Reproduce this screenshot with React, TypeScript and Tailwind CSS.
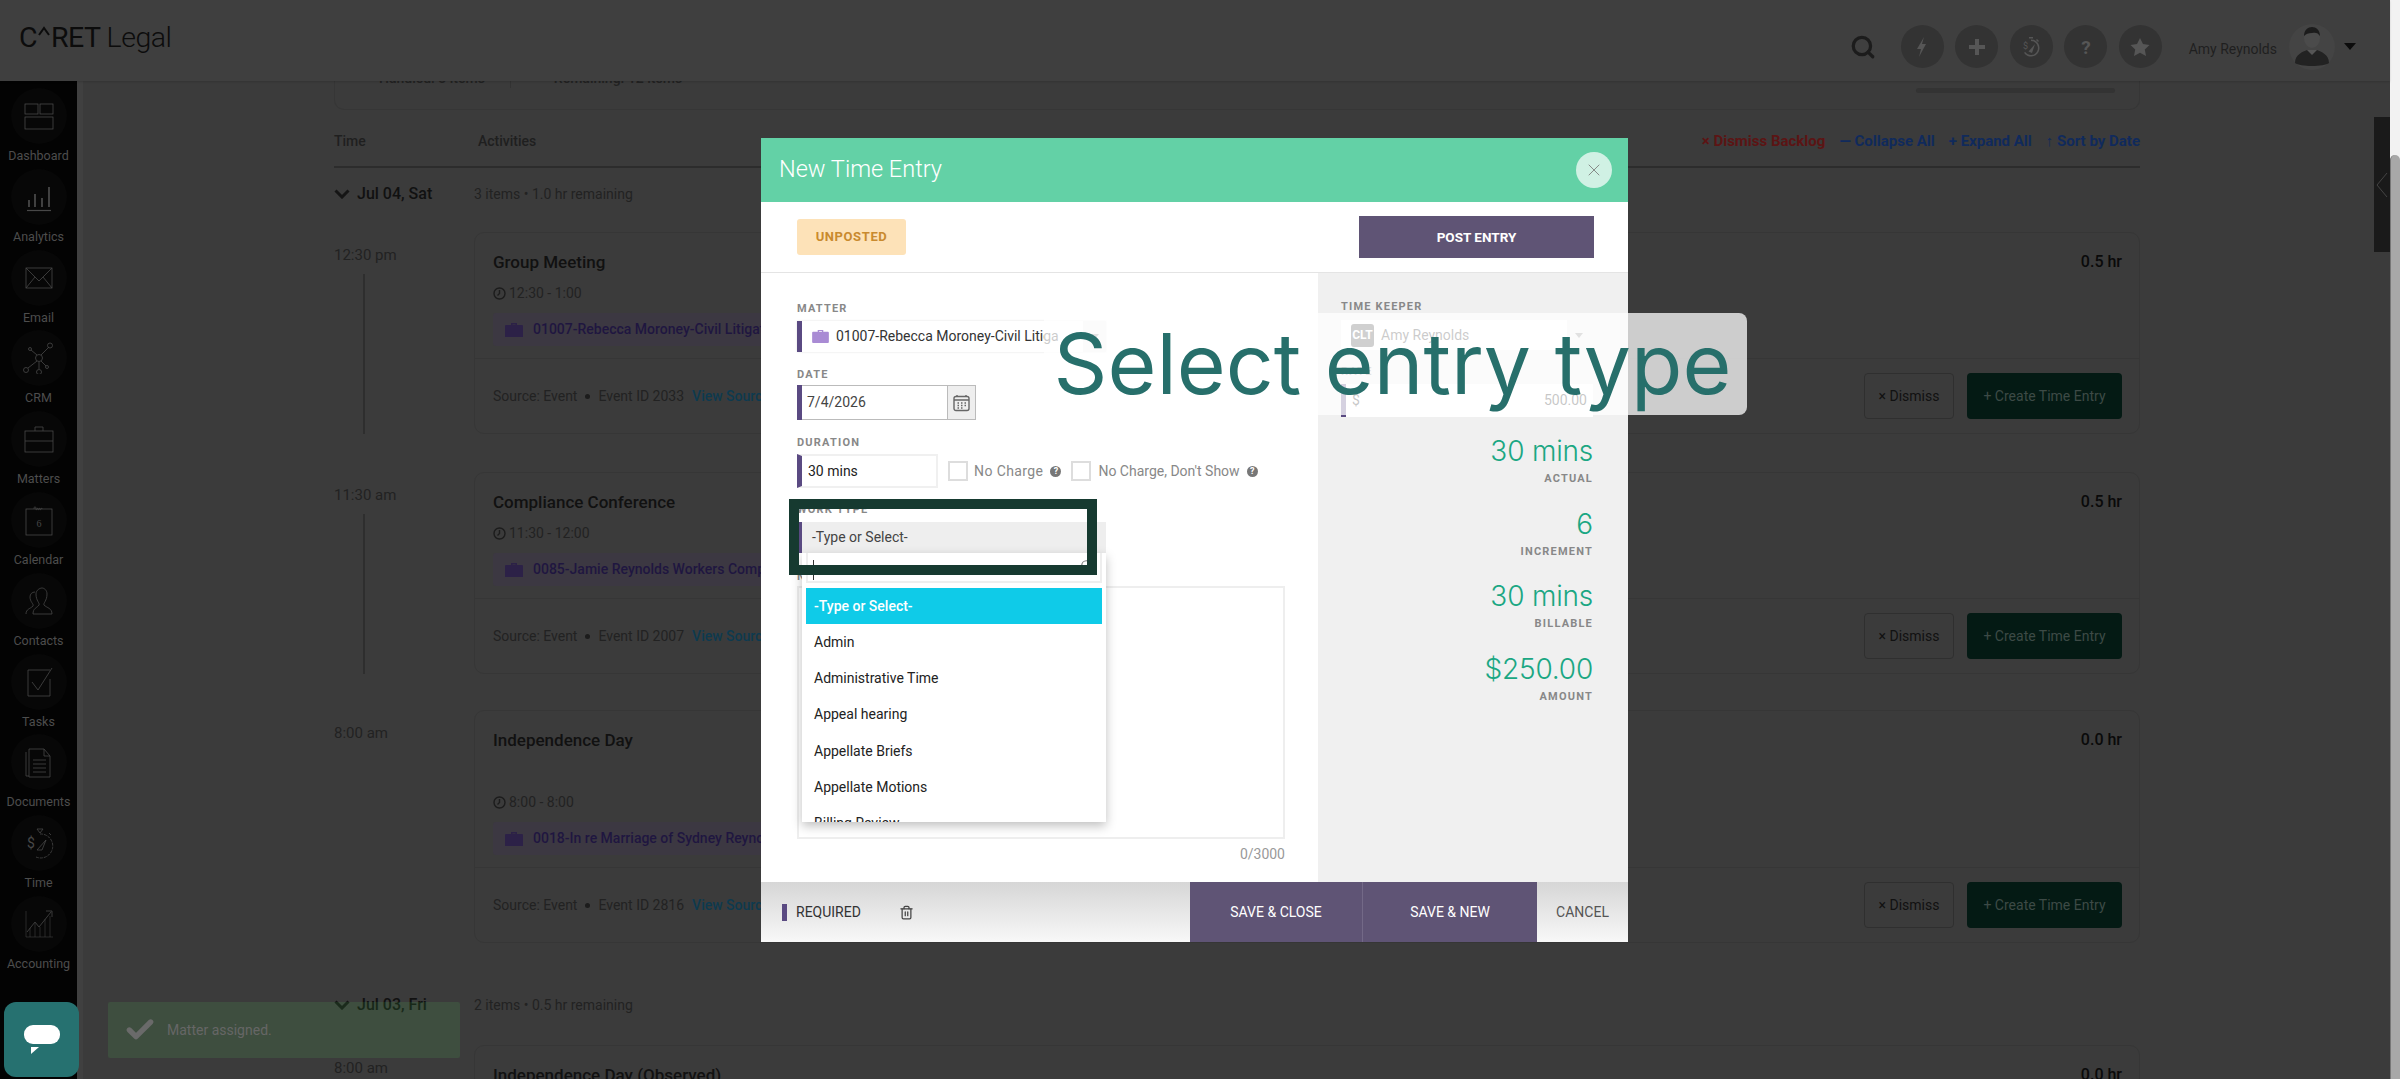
import { Check, Search, Trash2, X } from "lucide-react";

const navItems = [
  { label: "Dashboard", icon: <><rect x="2" y="4" width="13" height="10" /><rect x="17" y="4" width="13" height="10" /><rect x="2" y="17" width="28" height="12" /></> },
  { label: "Analytics", icon: <><path d="M6 26v-7M12 26V13M19 26v-9M26 26V6" strokeWidth="1.800" /><path d="M4 29.500h24" strokeWidth="1.200" /></> },
  { label: "Email", icon: <><rect x="3" y="6" width="26" height="20" /><path d="M3 6l13 13L29 6M3 26l9-11M29 26l-9-11" /></> },
  { label: "CRM", icon: <><circle cx="16" cy="16" r="3.500" /><circle cx="27" cy="3.500" r="2.500" /><circle cx="3" cy="28" r="2.500" /><circle cx="16" cy="30" r="2.500" /><circle cx="7" cy="7" r="1.500" /><circle cx="24" cy="25" r="1.500" /><path d="M18 13l8-8M14 19L5 26M16 20v7M14 13L8 8M18 19l5 5" /></> },
  { label: "Matters", icon: <><rect x="2" y="8" width="28" height="21" /><path d="M12 8V4h8v4M2 18h28" /></> },
  { label: "Calendar", icon: <><rect x="3" y="5" width="26" height="26" /><path d="M11 5c0-3 2-3 2 0s2-3 2 0 2-3 2 0 2-3 2 0" /><text x="16" y="23" textAnchor="middle" fontSize="10" fill="#484848" stroke="none" fontFamily="Liberation Serif, serif">6</text></> },
  { label: "Contacts", icon: <><path d="M3 29c0-5 4-5 7-8 1-2-3-4-3-9 0-3 2-5 5-5M10 29h19c0-6-5-6-8-9-1-2 3-4 3-11 0-4-3-6-5-6s-6 2-6 6c0 7 4 9 3 11-2 3-6 3-6 9" /></> },
  { label: "Tasks", icon: <><path d="M27 13v17H5V4h22" /><path d="M9 16l6 8L29 2" /></> },
  { label: "Documents", icon: <><path d="M6 3h15l6 7v21H6zM21 3v7h6M3 6v24h3M10 14h13M10 18h13M10 22h13M10 26h13" /></> },
  { label: "Time", icon: <><path d="M17 7a12 12 0 1 1-4 23" strokeDasharray="3 1" /><path d="M14 2h6l-3 4zM26 6l2 2" /><path d="M14 23l9-10-4 10z" /><text x="8" y="21" textAnchor="middle" fontSize="14" fill="#484848" stroke="none" fontFamily="Roboto, sans-serif">$</text></> },
  { label: "Accounting", icon: <><path d="M3 3v26h27M7 29V20M12 29V15M17 29V19M22 29V11M27 29V8" strokeWidth="0.500" /><path d="M4 24l8-10 4 5L28 4M23 3h6v6" /></> },
];

function SideIcon({ children }: { children: React.ReactNode }) {
  return (
    <svg width="32" height="32" viewBox="0 0 32 32" fill="none" stroke="#484848" strokeWidth="0.800">
      {children}
    </svg>
  );
}

function Sidebar() {
  return (
    <aside className="w-[77px] shrink-0 bg-[#030303]">
      {navItems.map((item) => (
        <div key={item.label} className="h-[80.8px] flex flex-col items-center pt-[7px]">
          <div className="w-[56px] h-[56px] shrink-0 rounded-full bg-[#070707] flex items-center justify-center">
            <SideIcon>{item.icon}</SideIcon>
          </div>
          <span className="mt-[4px] text-[12.500px] leading-[16px] text-[#4d4d4d] whitespace-nowrap">{item.label}</span>
        </div>
      ))}
    </aside>
  );
}

function RoundAction({ children }: { children: React.ReactNode }) {
  return (
    <div className="w-[43px] h-[43px] rounded-full bg-[#333333] flex items-center justify-center">
      <svg width="24" height="24" viewBox="0 0 24 24" fill="#565656">
        {children}
      </svg>
    </div>
  );
}

function TopBar() {
  return (
    <header className="relative z-10 h-[81px] shrink-0 bg-[#3f3f3f] flex items-center pt-[12px] pl-[19px] pr-[34px] shadow-[0_1px_2px_rgba(0,0,0,0.15)]">
      <div className="-mt-[16px] text-[28.500px] leading-none text-[#0c0c0c] tracking-[-0.5px] flex items-baseline font-normal">
        <span>C</span>
        <svg width="12" height="22" viewBox="0 0 12 22" fill="none" stroke="#0c0c0c" strokeWidth="2" className="mx-[1px]">
          <path d="M1 10l5-7 5 7" />
        </svg>
        <span>RET</span>
        <span className="ml-[6px] font-light">Legal</span>
      </div>
      <div className="ml-auto flex items-center">
        <Search size={26} strokeWidth={3} className="text-[#1c1c1c] mr-[25px]" />
        <div className="flex gap-[11.5px]">
          <RoundAction><path d="M14 2L7 14h4l-2 8 7-13h-4z" /></RoundAction>
          <RoundAction><path d="M10 4h4v6h6v4h-6v6h-4v-6H4v-4h6z" /></RoundAction>
          <RoundAction>
            <path d="M12 4.500a8.500 8.500 0 1 1-7 13.300l1.200-.8A7 7 0 1 0 12 6zM10 2h4v1.500h-4zM18 4l2 2-1 1-2-2zM9.500 16.500L16 9l-3 9z" />
            <text x="6.500" y="14" textAnchor="middle" fontSize="9" fontFamily="Roboto, sans-serif">$</text>
          </RoundAction>
          <RoundAction><text x="12" y="19" textAnchor="middle" fontSize="19" fontWeight="700" fontFamily="Roboto, sans-serif">?</text></RoundAction>
          <RoundAction><path d="M12 3l3 6 6.500 1-4.700 4.500 1.200 6.500-6-3.200L6 21l1.200-6.500L2.500 10 9 9z" /></RoundAction>
        </div>
        <span className="ml-[27px] mt-[5px] text-[14px] text-[#1f1f1f]">Amy Reynolds</span>
        <div className="ml-[12px] w-[46px] h-[46px] rounded-full bg-[#444444] flex items-center justify-center">
          <svg width="36" height="40" viewBox="0 0 36 40">
            <ellipse cx="18" cy="11" rx="8" ry="10" fill="#4b4b4b" />
            <path d="M10 9c0-6 4-9 8-9s8 3 8 9c-2-3-4-4-8-3-4 0-6 1-8 3z" fill="#1c1c1c" />
            <path d="M1 36c0-9 8-11 12-13h10c4 2 12 4 12 13-5 4-29 4-34 0z" fill="#222222" />
            <path d="M13 23l5 5 5-5z" fill="#555555" />
          </svg>
        </div>
        <div className="ml-[9px] w-0 h-0 border-x-[6px] border-x-transparent border-t-[7px] border-t-[#0c0c0c]" />
      </div>
    </header>
  );
}

function DayRow({ date, summary, className }: { date: string; summary: string; className: string }) {
  return (
    <div className={`flex items-center h-[24px] ${className}`}>
      <svg width="16" height="10" viewBox="0 0 16 10" className="mr-[7px]" fill="none" stroke="#151515" strokeWidth="3">
        <path d="M1.500 1.500L8 8l6.500-6.500" />
      </svg>
      <span className="w-[117px] text-[16px] font-medium text-[#111111] whitespace-nowrap">{date}</span>
      <span className="text-[14px] text-[#222222] whitespace-nowrap">{summary}</span>
    </div>
  );
}

type Entry = {
  time: string;
  title: string;
  range?: string;
  matter?: string;
  eventId?: string;
  hours: string;
  line?: boolean;
  tall?: boolean;
};

function EntryCard({ entry }: { entry: Entry }) {
  return (
    <div className="w-[1666px] rounded-[10px] border border-[#363636]">
      <div className="flex items-start justify-between pt-[17px] pl-[18px] pr-[17px]">
        <h3 className="text-[17px] leading-[24px] font-medium text-[#111111] whitespace-nowrap">{entry.title}</h3>
        <span className="text-[16px] leading-[24px] font-medium text-[#0a0a0a]">{entry.hours}</span>
      </div>
      {entry.range && (
        <div className={`pl-[18px] pb-[12px] ${entry.tall ? "pt-[40px]" : "pt-[9px]"}`}>
          <div className="flex items-center h-[20px] text-[14px] text-[#222222]">
            <svg width="13" height="13" viewBox="0 0 13 13" fill="none" stroke="#1c1c1c" strokeWidth="1.400" className="mr-[3px]">
              <circle cx="6.500" cy="6.500" r="5.500" />
              <path d="M6.500 3v3.500L4.500 8.500" />
            </svg>
            {entry.range}
          </div>
          <div className="mt-[10px] h-[33px] w-[420px] rounded-[3px] bg-[#3c3842] flex items-center pl-[12px] text-[14px] font-medium text-[#1f1640] whitespace-nowrap">
            <svg width="18" height="16" viewBox="0 0 18 16" fill="#2c2147" className="mr-[10px]">
              <path d="M6 1h6v2h5a1 1 0 0 1 1 1v11H0V4a1 1 0 0 1 1-1h5zM7.500 2.500V3h3v-.5z" />
            </svg>
            {entry.matter}
          </div>
        </div>
      )}
      {entry.eventId && (
        <div className="h-[75px] border-t border-[#363636] flex items-center justify-between pl-[18px] pr-[17px]">
          <div className="flex items-center text-[14px] text-[#222222] whitespace-nowrap">
            Source: Event
            <span className="mx-[8px] w-[5px] h-[5px] rounded-full bg-[#1c1c1c]" />
            Event ID {entry.eventId}
            <span className="ml-[8px] font-medium text-[#0d3a4f]">View Source</span>
          </div>
          <div className="flex items-center gap-[13px]">
            <div className="w-[90px] h-[46px] rounded-[4px] border border-[#2f2f2f] flex items-center justify-center text-[14px] text-[#111111]">× Dismiss</div>
            <div className="w-[155px] h-[46px] rounded-[4px] bg-[#041a14] flex items-center justify-center text-[14px] text-[#3d4a46]">+ Create Time Entry</div>
          </div>
        </div>
      )}
    </div>
  );
}

function TimelineEntry({ entry, className }: { entry: Entry; className: string }) {
  return (
    <div className={`flex ${className}`}>
      <div className="w-[140px] shrink-0 flex flex-col pt-[13px]">
        <span className="text-[15px] leading-[20px] text-[#222222]">{entry.time}</span>
        {entry.line && <div className="ml-[29px] mt-[9px] w-[2px] flex-1 bg-[#2e2e2e]" />}
      </div>
      <EntryCard entry={entry} />
    </div>
  );
}

function MainContent() {
  return (
    <main className="flex-1 min-w-0 pl-[251px]">
      <div className="w-[1806px]">
        <div className="relative -mt-[31px] h-[60px] rounded-b-[10px] border border-t-0 border-[#363636] flex items-start pt-[18px] pl-[26px] text-[14px] font-medium text-[#222222]">
          <span className="mt-[7px] w-[6px] h-[6px] rounded-full bg-[#1f5a3c]" />
          <span className="ml-[12px]">Handled: 3 items</span>
          <span className="ml-[25px] w-px h-[20px] bg-[#333333]" />
          <span className="ml-[27px] mt-[7px] w-[6px] h-[6px] rounded-full bg-[#7a5418]" />
          <span className="ml-[10px]">Remaining: 12 items</span>
          <div className="ml-auto mr-[24px] mt-[20px] w-[199px] h-[5px] shrink-0 rounded-full bg-[#333333]" />
        </div>

        <div className="flex items-center justify-between h-[58px] border-b-2 border-[#2c2c2c] pt-[6px] text-[14px] font-medium text-[#1f1f1f]">
          <div className="flex">
            <span className="w-[144px]">Time</span>
            <span>Activities</span>
          </div>
          <div className="flex gap-[14px] text-[15px] font-bold">
            <span className="text-[#5c1414]">× Dismiss Backlog</span>
            <span className="text-[#102a5c]">— Collapse All</span>
            <span className="text-[#102a5c]">+ Expand All</span>
            <span className="text-[#102a5c]">↑ Sort by Date</span>
          </div>
        </div>

        <DayRow className="mt-[14px]" date="Jul 04, Sat" summary="3 items • 1.0 hr remaining" />
        <TimelineEntry
          className="mt-[26px] pb-[38px]"
          entry={{ time: "12:30 pm", title: "Group Meeting", range: "12:30 - 1:00", matter: "01007-Rebecca Moroney-Civil Litigation", eventId: "2033", hours: "0.5 hr", line: true }}
        />
        <TimelineEntry
          className="pb-[36px]"
          entry={{ time: "11:30 am", title: "Compliance Conference", range: "11:30 - 12:00", matter: "0085-Jamie Reynolds Workers Compensation", eventId: "2007", hours: "0.5 hr", line: true }}
        />
        <TimelineEntry
          entry={{ time: "8:00 am", title: "Independence Day", range: "8:00 - 8:00", matter: "0018-In re Marriage of Sydney Reynolds", eventId: "2816", hours: "0.0 hr", tall: true }}
          className=""
        />

        <DayRow className="mt-[50px]" date="Jul 03, Fri" summary="2 items • 0.5 hr remaining" />
        <TimelineEntry className="mt-[28px]" entry={{ time: "8:00 am", title: "Independence Day (Observed)", hours: "0.0 hr" }} />
      </div>
    </main>
  );
}

function FieldLabel({ children, className = "" }: { children: React.ReactNode; className?: string }) {
  return <div className={`text-[11px] leading-[14px] font-bold tracking-[1.2px] text-[#888888] whitespace-nowrap ${className}`}>{children}</div>;
}

function HelpDot() {
  return (
    <span className="ml-[7px] w-[11px] h-[11px] rounded-full bg-[#777777] text-white text-[9px] leading-[11px] font-bold text-center">?</span>
  );
}

function ArrowBox() {
  return (
    <div className="w-[23px] h-full bg-[#eeeeee] flex items-center justify-center">
      <div className="w-0 h-0 border-x-[4px] border-x-transparent border-t-[5px] border-t-[#888888]" />
    </div>
  );
}

const workTypes = ["Admin", "Administrative Time", "Appeal hearing", "Appellate Briefs", "Appellate Motions", "Billing Review"];

function FormColumn() {
  return (
    <div className="w-[557px] shrink-0 pl-[36px] pt-[29px] text-[14px]">
      <FieldLabel className="mb-[5px]">MATTER</FieldLabel>
      <div className="h-[31px] w-[309px] flex border-l-[5px] border-[#5a4a82] shadow-[0_0_2px_rgba(0,0,0,0.12)]">
        <div className="flex-1 flex items-center pl-[10px] overflow-hidden whitespace-nowrap text-[#333333]">
          <svg width="17" height="13" viewBox="0 0 18 14" fill="#a98bd4" className="mr-[7px] shrink-0">
            <path d="M6 0h6v2h5a1 1 0 0 1 1 1v10a1 1 0 0 1-1 1H1a1 1 0 0 1-1-1V3a1 1 0 0 1 1-1h5zM7.500 1.200V2h3v-.8z" />
          </svg>
          01007-Rebecca Moroney-Civil Litiga
        </div>
        <ArrowBox />
      </div>

      <FieldLabel className="mt-[16px] mb-[3px]">DATE</FieldLabel>
      <div className="h-[35px] w-[179px] flex border-l-[5px] border-[#5a4a82]">
        <div className="flex-1 border-y border-[#bbbbbb] flex items-center pl-[5px] text-[#444444]">7/4/2026</div>
        <div className="w-[29px] border border-[#bbbbbb] bg-[#eeeeee] flex items-center justify-center">
          <svg width="17" height="18" viewBox="0 0 17 18" fill="none" stroke="#666666" strokeWidth="1.400">
            <rect x="1" y="2.500" width="15" height="14" rx="2" />
            <path d="M1 6h15M4 1v2M13 1v2M4.500 9h1.500M8 9h1.500M11.500 9h1.500M4.500 11.500h1.500M8 11.500h1.500M11.500 11.500h1.500M4.500 14h1.500M8 14h1.500" />
          </svg>
        </div>
      </div>

      <FieldLabel className="mt-[16px] mb-[4px]">DURATION</FieldLabel>
      <div className="flex items-center">
        <div className="h-[34px] w-[141px] flex items-center pl-[6px] border-l-[5px] border-l-[#5a4a82] border-y-2 border-r-2 border-y-[#f0f0f0] border-r-[#f0f0f0] text-[#222222]">30 mins</div>
        <div className="ml-[10px] w-[20px] h-[20px] border-2 border-[#dddddd]" />
        <span className="ml-[6px] text-[#888888] tracking-[0.4px]">No Charge</span>
        <HelpDot />
        <div className="ml-[10px] w-[20px] h-[20px] border-2 border-[#dddddd]" />
        <span className="ml-[7px] text-[#888888] whitespace-nowrap">No Charge, Don't Show</span>
        <HelpDot />
      </div>

      <FieldLabel className="mt-[15px] mb-[5px]">WORK TYPE</FieldLabel>
      <div className="relative z-10 w-[309px]">
        <div className="h-[31px] flex items-center pl-[10px] border-l-[5px] border-[#5a4a82] bg-[#eeeeee] text-[#444444]">-Type or Select-</div>
        <div className="absolute left-[5px] top-[31px] w-[304px] h-[269px] bg-white shadow-[0_4px_10px_rgba(0,0,0,0.25)] overflow-hidden">
          <div className="mx-[4px] h-[30px] border-b-2 border-x-2 border-[#eeeeee] relative">
            <div className="absolute left-[5px] top-[7px] w-px h-[20px] bg-[#333333]" />
            <Search size={14} className="absolute right-[6px] top-[6px] text-[#777777]" />
          </div>
          <div className="mx-[4px] mt-[5px] h-[36px] bg-[#0fcbe8] flex items-center pl-[8px] font-medium text-white">-Type or Select-</div>
          {workTypes.map((type) => (
            <div key={type} className="h-[36.300px] flex items-center pl-[12px] text-[#222222]">{type}</div>
          ))}
        </div>
      </div>

      <FieldLabel className="mt-[17px] mb-[2px]">NARRATIVE</FieldLabel>
      <div className="w-[488px] h-[253px] border-2 border-[#eeeeee]" />
      <div className="w-[488px] mt-[6px] text-right text-[#999999] leading-[18px]">0/3000</div>
    </div>
  );
}

function Stat({ value, label }: { value: string; label: string }) {
  return (
    <div className="text-right">
      <div className="text-[28px] leading-[36px] font-light tracking-[-0.2px] text-[#1ba783] [font-family:Inter,sans-serif]">{value}</div>
      <div className="mt-[3px] text-[11px] leading-[14px] font-bold tracking-[1.200px] text-[#888888]">{label}</div>
    </div>
  );
}

function SummaryColumn() {
  return (
    <div className="flex-1 bg-[#f0f0f0] pl-[23px] pr-[35px] pt-[27px] text-[14px]">
      <FieldLabel className="mb-[6px]">TIME KEEPER</FieldLabel>
      <div className="h-[30px] w-[249px] bg-white flex items-center pl-[10px]">
        <div className="w-[23px] h-[23px] rounded-[3px] bg-[#444444] text-white text-[12px] font-bold leading-[23px] text-center">CLT</div>
        <span className="ml-[7px] text-[#333333] flex-1">Amy Reynolds</span>
        <ArrowBox />
      </div>
      <FieldLabel className="mt-[15px] mb-[5px]">RATE</FieldLabel>
      <div className="h-[33px] w-[252px] bg-white border-l-[5px] border-[#5a4a82] flex items-center justify-between pl-[6px] pr-[6px] text-[#222222]">
        <span>$</span>
        <span>500.00</span>
      </div>
      <div className="mt-[16px] flex flex-col gap-[19.500px]">
        <Stat value="30 mins" label="ACTUAL" />
        <Stat value="6" label="INCREMENT" />
        <Stat value="30 mins" label="BILLABLE" />
        <Stat value="$250.00" label="AMOUNT" />
      </div>
    </div>
  );
}

function TimeEntryModal() {
  return (
    <div className="absolute left-[761px] top-[138px] z-20 w-[867px] h-[804px] bg-white flex flex-col">
      <div className="h-[64px] shrink-0 bg-[#63d1a6] flex items-center justify-between pl-[18px] pr-[16px]">
        <h2 className="text-[23.500px] font-light text-white">New Time Entry</h2>
        <div className="w-[36px] h-[36px] rounded-full bg-white/70 flex items-center justify-center">
          <X size={20} strokeWidth={1} className="text-[#777777]" />
        </div>
      </div>
      <div className="h-[71px] shrink-0 border-b border-[#e4e4e4] flex items-center justify-between pl-[36px] pr-[34px]">
        <div className="w-[109px] h-[36px] rounded-[3px] bg-[#fde2b8] flex items-center justify-center text-[13px] font-bold tracking-[0.6px] text-[#c98a2e]">UNPOSTED</div>
        <div className="w-[235px] h-[42px] bg-[#5f5475] flex items-center justify-center text-[13.500px] font-bold text-white">POST ENTRY</div>
      </div>
      <div className="h-[609px] shrink-0 flex">
        <FormColumn />
        <SummaryColumn />
      </div>
      <div className="h-[60px] shrink-0 bg-gradient-to-b from-[#d6d6d6] to-[#f8f8f8] flex items-center pl-[21px] text-[14px]">
        <div className="w-[5px] h-[17px] bg-[#5a4a82]" />
        <span className="ml-[9px] text-[#333333]">REQUIRED</span>
        <Trash2 size={15} className="ml-[38px] text-[#444444]" />
        <div className="ml-auto flex h-full">
          <div className="w-[173px] bg-[#5f5475] border-r border-[#736987] flex items-center justify-center text-white">SAVE &amp; CLOSE</div>
          <div className="w-[174px] bg-[#5f5475] flex items-center justify-center text-white">SAVE &amp; NEW</div>
          <div className="w-[91px] flex items-center justify-center text-[#555555]">CANCEL</div>
        </div>
      </div>
    </div>
  );
}

function Toast() {
  return (
    <div className="absolute left-[108px] top-[1002px] z-10 w-[352px] h-[56px] rounded-[2px] bg-[#5af963]/10 flex items-center pl-[16px]">
      <Check size={32} strokeWidth={4} className="text-[#6a6a6a]" />
      <span className="ml-[11px] text-[14px] text-[#666666]">Matter assigned.</span>
    </div>
  );
}

function ChatButton() {
  return (
    <div className="absolute left-[4px] top-[1002px] z-10 w-[75px] h-[75px] rounded-[12px] bg-[#267170] flex items-center justify-center">
      <svg width="36" height="30" viewBox="0 0 36 30" fill="white">
        <rect width="36" height="19" rx="9" />
        <path d="M7 22h8l-8 7z" />
      </svg>
    </div>
  );
}

export default function App() {
  return (
    <div className="relative w-[2400px] h-[1079px] overflow-hidden bg-[#3b3b3b] flex [font-family:Roboto,sans-serif]">
      <div className="flex-1 min-w-0 flex flex-col">
        <TopBar />
        <div className="flex flex-1 min-h-0">
          <Sidebar />
          <div className="w-[6px] shrink-0 bg-[#404040]" />
          <MainContent />
        </div>
      </div>
      <div className="w-[10px] shrink-0 bg-[#f2f2f2] flex flex-col pt-[155px]">
        <div className="flex-1 rounded-t-full border-l border-[#777777] bg-[#a8a8a8]" />
      </div>

      <div className="absolute right-[10px] top-[117px] z-10 w-[16px] h-[135px] bg-[#1a1a1a] flex items-center justify-center">
        <svg width="12" height="26" viewBox="0 0 12 26" fill="none" stroke="#444444">
          <path d="M11 1L1 13l10 12" />
        </svg>
      </div>

      <Toast />
      <ChatButton />
      <TimeEntryModal />

      {/* annotation frame round the work type field */}
      <div className="absolute z-30 left-[789px] top-[499px] w-[308px] h-[76px] border-[10px] border-[#163a30]" />

      {/* callout */}
      <div className="absolute z-30 left-[1044px] top-[313px] w-[703px] h-[102px] rounded-r-[8px] bg-white/75 flex items-center justify-center pr-[6px]">
        <span className="text-[84px] leading-none text-[#276f6b] whitespace-nowrap [font-family:Inter,sans-serif]">Select entry type</span>
      </div>
    </div>
  );
}
